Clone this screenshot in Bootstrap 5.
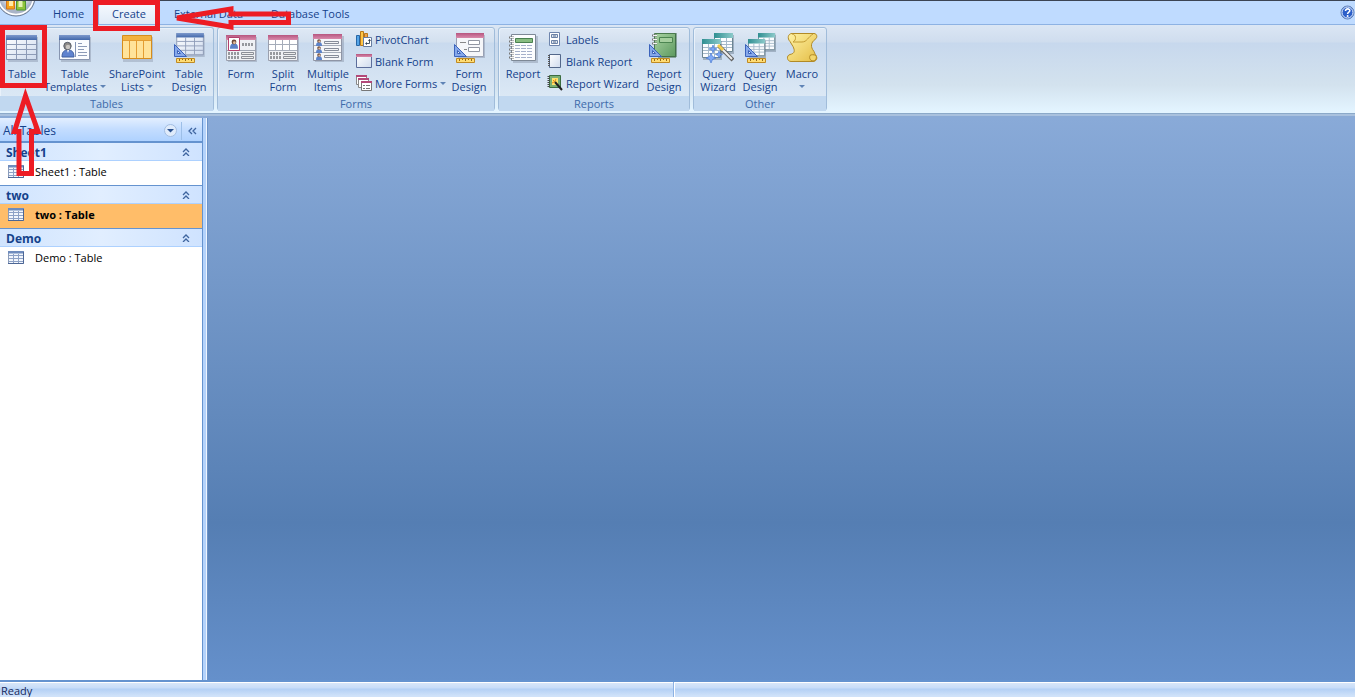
<!DOCTYPE html>
<html lang="en">
<head>
<meta charset="utf-8">
<meta name="viewport" content="width=device-width, initial-scale=1">
<title>Database – Create</title>
<link href="https://cdn.jsdelivr.net/npm/bootstrap@5.3.0/dist/css/bootstrap.min.css" rel="stylesheet">
<style>
  body { font-family: "Open Sans", "Noto Sans", sans-serif; font-size: 11px; line-height: 13px; color: #15428b; background: #bfdbff; }
  button { font: inherit; color: inherit; background: none; border: 0; padding: 0; }
  svg { display: block; flex: none; }

  .tabbar { height: 24px; border-top: 1px solid #3b4454; background: #bfdbff; }
  .orb { width: 40px; display: flex; align-items: flex-start; }
  .ribbon-tabs { --bs-nav-tabs-border-width: 0; gap: 2px; }
  .ribbon-tabs .nav-link { padding: 6px 13px 4px; font-size: 11px; line-height: 13px; color: #15428b; border: 0; }
  .ribbon-tabs .nav-link.active { color: #15428b; background: linear-gradient(#f8fbff, #dfeaf7); border-radius: 3px 3px 0 0; box-shadow: 0 0 0 1px #8db2e3; }

  .ribbon { height: 90px; padding: 2px 0; border-top: 1px solid #8db2e3; border-bottom: 1px solid #8ba9c9;
    background: linear-gradient(#dbe6f4 0, #cfddee 17px, #c7d8ed 18px, #d3e2ee 60px, #e3f4ff 86px); gap: 3px; }
  .ribbon-edge { height: 4px; background: #a9c1de; border-bottom: 2px solid #8aaad6; }
  .tool-group { border: 1px solid #a0bcda; border-radius: 3px; background: linear-gradient(#dfe9f5 0, #d3e0ef 14px, #c9daee 15px, #dbe8f5 68px); box-shadow: inset 1px 1px 0 #e9f1fa; width: fit-content; }
  .tool-group.first { border-left: 0; border-radius: 0 3px 3px 0; }
  .tools { display: grid; height: 68px; padding: 0 2px; }
  .tools-tables { grid-template-columns: 44px 62px 62px 42px; padding: 0 3px 0 0; }
  .tools-forms { grid-template-columns: 42px 42px 48px 96px 42px; padding: 0 4px 0 2px; }
  .tools-reports { grid-template-columns: 48px 96px 42px; padding: 0 4px 0 0; }
  .tools-other { grid-template-columns: 42px 42px 42px; padding: 0 3px; }
  .group-name { height: 15px; line-height: 15px; text-align: center; color: #3e6aaa; background: #c1d8f0; }
  .big { display: flex; flex-direction: column; align-items: center; padding-top: 4px; white-space: nowrap; }
  .big span { margin-top: 3px; }
  .small-list { display: flex; flex-direction: column; padding-left: 4px; }
  .tools-reports .small-list { padding-left: 0; }
  .small-list button { display: flex; align-items: center; height: 22px; gap: 3px; white-space: nowrap; text-align: left; }
  .caret { display: inline-block; border: 3px solid transparent; border-top-color: #5f83b5; border-bottom: 0; vertical-align: 3px; }

  .side { width: 203px; background: #fff; border-right: 1px solid #6593cf; }
  .pane-head { height: 25px; font-size: 12px; padding: 2px 0 0 3px; border-bottom: 2px solid #6593cf; background: linear-gradient(#e3efff, #c4ddff 11px, #afd2ff); }
  .pane-head .shut { width: 21px; height: 18px; border-left: 1px solid #9dbfe8; display: grid; place-items: center; }
  .section-head { width: 100%; height: 18px; padding: 1px 12px 0 6px; font-size: 12px; font-weight: 700; border-bottom: 1px solid #add1ff; background: linear-gradient(90deg, #d0e4fe, #e1eeff 50%, #cfe3ff); }
  .entry { height: 25px; padding: 0 8px 4px; gap: 11px; color: #000; text-decoration: none; border-bottom: 1px solid #6593cf; }
  .entry.chosen { background: #ffbd69; font-weight: 700; }
  .entry.final { border-color: transparent; }
  .splitter { width: 4px; background: #b5d3fb; border-right: 1px solid #eef5ff; }
  .canvas { background: linear-gradient(#89aad8, #557eb3 72%, #6590cb); border-left: 1px solid #6c93c8; }
  .status { height: 17px; padding-left: 1px; border-top: 2px solid #6593cf; background: linear-gradient(#fff 0, #fff 1px, #d7e6f9 1px, #c7dcf8 6px, #b3d0f5 7px, #d0e2f9 14px); color: #15285b; }
  .status > div { flex: 1 1 50%; padding-top: 2px; }
  .status > div:first-child { flex: 0 0 calc(50% - 5px); }
  .status > div + div { border-left: 1px solid #8db2e3; box-shadow: inset 1px 0 0 #fff; }
  .marks { position: absolute; left: 0; top: 0; pointer-events: none; }
</style>
</head>
<body>
<svg width="0" height="0" class="position-absolute" aria-hidden="true">
  <defs>
    <linearGradient id="gBlue" x2="0" y2="1"><stop stop-color="#7d99cc"/><stop offset="1" stop-color="#4268ab"/></linearGradient>
    <linearGradient id="gRose" x2="0" y2="1"><stop stop-color="#b6567f"/><stop offset="1" stop-color="#d98aac"/></linearGradient>
    <linearGradient id="gTeal" x2="1"><stop stop-color="#2f8f92"/><stop offset="1" stop-color="#8ccaca"/></linearGradient>
    <linearGradient id="gCell" x2="1" y2="1"><stop stop-color="#fff"/><stop offset="1" stop-color="#cfdbee"/></linearGradient>
    <linearGradient id="gGold" x2="1" y2="1"><stop stop-color="#fff3a6"/><stop offset="1" stop-color="#e4bd45"/></linearGradient>
    <linearGradient id="gGreen" x2="1" y2="1"><stop stop-color="#a9d3a2"/><stop offset="1" stop-color="#5d9a60"/></linearGradient>
    <radialGradient id="gOrb" cy=".35"><stop stop-color="#fff"/><stop offset=".6" stop-color="#e8ebf2"/><stop offset="1" stop-color="#a9b4c8"/></radialGradient>
    <symbol id="ruler" viewBox="0 0 32 32">
      <path d="M1.500 12.500v12h12z" fill="#86a8ea" stroke="#3c63bb"/><path d="M4.500 18.500v3h3z" fill="#eaf1fc" stroke="#3c63bb"/>
      <path d="M3.500 26.500h18v4h-18z" fill="#ffdc73" stroke="#c08a22"/><path d="M6.500 27v2m3-2v1m3-1v2m3-2v1m3-1v2" stroke="#94691a"/>
    </symbol>
    <symbol id="grid" viewBox="0 0 32 27">
      <path d="M2 2h30v25H2z" fill="#8794aa" opacity=".45"/><path d="M.5.500h30v24H.5z" fill="url(#gCell)" stroke="#8795b0"/>
      <path d="M0 0h31v5H0z" fill="url(#gBlue)"/><path d="M1 9.500h29M1 14.500h29M1 19.500h29M10.500 5v19M20.500 5v19" stroke="#8d9bb7"/>
    </symbol>
    <symbol id="tealgrid" viewBox="0 0 20 21"><path d="M1 2h19v19H1z" fill="#5a6c7c" opacity=".4"/><path d="M.5.500h18v18H.5z" fill="#fbfdff" stroke="#6c8592"/><path d="M0 0h19v5H0z" fill="url(#gTeal)"/><path d="M1 8.500h17M1 11.500h17M1 14.500h17M6.500 5v13M12.500 5v13" stroke="#a5b9ca"/></symbol>
    <symbol id="minigrid" viewBox="0 0 16 13"><path d="M.5.500h15v12H.5z" fill="#f2f6fc" stroke="#8a9cbb"/><path d="M0 0h16v2.500H0z" fill="#6f8cbd"/><path d="M1 4.500h14M1 7.500h14M1 10.500h14M5.500 3v9M10.500 3v9" stroke="#8ea2c6"/><path d="M15.500 1v11.500H0" fill="none" stroke="#4c6695"/></symbol>
    <symbol id="fold" viewBox="0 0 8 8"><path d="M1 4l3-3 3 3M1 8l3-3 3 3" fill="none" stroke="#3f659f" stroke-width="1.300"/></symbol>
    <symbol id="formbase" viewBox="0 0 32 32">
      <path d="M3 5h29v25H3z" fill="#7c869b" opacity=".4"/><path d="M1.500 3.500h29v25h-29z" fill="#eff1f5" stroke="#9a9fad"/><path d="M1 3h30v5H1z" fill="url(#gRose)"/>
      <path d="M2 18.500h28" stroke="#9da3b0"/><path d="M3 21.500h12M3 25.500h12" stroke="#96999e" stroke-width="3" stroke-dasharray="2 1"/><path d="M16.500 20.500h12v2h-12zM16.500 24.500h12v2h-12z" fill="#eee" stroke="#8b8f97"/>
    </symbol>
    <symbol id="designform" viewBox="0 0 32 32"><path d="M5 3h27v23H5z" fill="#7c869b" opacity=".4"/><path d="M3.500 1.500h27v23h-27z" fill="#f5f6f9" stroke="#98a0b4"/><path d="M3 1h28v5H3z" fill="url(#gRose)"/><path d="M7 10.500h6M11 17.500h3" stroke="#888"/><path d="M15.500 8.500h11v4h-11zM15.500 15.500h11v4h-11z" fill="#fff" stroke="#9196a2"/><use href="#ruler"/></symbol>
    <symbol id="person" viewBox="0 0 6 7"><path d="M0 7c0-3 1-4 3-4s3 1 3 4z" fill="#5b82c9"/><circle cx="3" cy="2" r="1.800" fill="#6c4a3a"/><circle cx="3.300" cy="2.500" r="1" fill="#e4bd9f"/></symbol>
    <symbol id="spiral" viewBox="0 0 6 24"><path d="M0 1.500h5M0 5.500h5M0 9.500h5M0 13.500h5M0 17.500h5M0 21.500h5" stroke="#777" stroke-width="2"/><path d="M1 1.500h4M1 5.500h4M1 9.500h4M1 13.500h4M1 17.500h4M1 21.500h4" stroke="#f4f4f4"/></symbol>
  </defs>
</svg>

<div class="d-flex flex-column vh-100 overflow-hidden position-relative">
  <header class="tabbar d-flex flex-shrink-0">
    <button class="orb" aria-label="Office menu">
      <svg width="36" height="18" viewBox="0 0 36 18"><circle cx="16" cy="-4" r="19" fill="url(#gOrb)" stroke="#69788f"/><circle cx="16" cy="-4" r="17.500" fill="none" stroke="#fff" stroke-width="1.500"/>
        <path d="M6.500-1h8v9h-8z" fill="#f4a21b" stroke="#d4731c"/><path d="M9-1h4v6H9z" fill="#ffe9a6"/><path d="M16.500 0h9v9h-9z" fill="#8fc33a" stroke="#4d9431"/><path d="M18.500 0h4v6h-4z" fill="#e4f3b3"/></svg>
    </button>
    <nav class="nav nav-tabs ribbon-tabs" aria-label="Ribbon tabs">
      <a class="nav-link" href="#">Home</a>
      <a class="nav-link active" href="#" aria-current="page">Create</a>
      <a class="nav-link" href="#">External Data</a>
      <a class="nav-link" href="#">Database Tools</a>
    </nav>
    <button class="ms-auto" aria-label="Help">
      <svg width="15" height="15" viewBox="0 0 15 15"><circle cx="7.500" cy="7.500" r="6.500" fill="#2c5fc9" stroke="#5c7fb8"/><circle cx="7.500" cy="7.500" r="5.500" fill="none" stroke="#e6f0ff"/><path d="M5.500 6c0-3 4.500-2.600 4.300-.2C9.700 7.200 7.600 7 7.600 9" fill="none" stroke="#fff" stroke-width="1.600"/><circle cx="7.600" cy="11" r="1" fill="#fff"/></svg>
    </button>
  </header>

  <div class="ribbon d-flex flex-shrink-0" role="toolbar" aria-label="Create">
    <section class="tool-group first">
      <div class="tools tools-tables">
        <button class="big"><svg width="32" height="32" viewBox="0 0 32 32"><use href="#grid" y="3" width="32" height="27"/></svg><span>Table</span></button>
        <button class="big"><svg width="32" height="32" viewBox="0 0 32 32"><path d="M2 5h30v25H2z" fill="#7c869b" opacity=".4"/><path d="M.5 3.500h30v24H.5z" fill="#fafcff" stroke="#8795b0"/><path d="M0 3h31v5H0z" fill="url(#gBlue)"/><path d="M3 25c0-5 2-7 6-7s6 2 6 7z" fill="#5f83cf" stroke="#3f5f9e"/><path d="M8 18l1 3 1-3z" fill="#fff"/><circle cx="8.500" cy="14" r="3.700" fill="#8c8a88" stroke="#555c68"/><circle cx="9" cy="15" r="2.200" fill="#c9c6c3"/><path d="M16.500 10v15" stroke="#8294b5"/><path d="M19 11.500h4M19 14.500h9M19 17.500h6M19 20.500h9M19 23.500h9" stroke="#8c9bb8"/></svg><span>Table<br>Templates <i class="caret"></i></span></button>
        <button class="big"><svg width="32" height="32" viewBox="0 0 32 32"><path d="M2 5h30v25H2z" fill="#7c869b" opacity=".35"/><path d="M1.500 3.500h29v23h-29z" fill="#ffe39a" stroke="#d68d1c"/><path d="M2 4h28v4H2z" fill="#f2b23f"/><path d="M2 8.500h28M8.500 8v18M15.500 8v18M22.500 8v18" stroke="#e39d33"/></svg><span>SharePoint<br>Lists <i class="caret"></i></span></button>
        <button class="big"><svg width="32" height="32" viewBox="0 0 32 32"><use href="#grid" x="3" y="1" width="29" height="24"/><use href="#ruler"/></svg><span>Table<br>Design</span></button>
      </div>
      <div class="group-name">Tables</div>
    </section>

    <section class="tool-group">
      <div class="tools tools-forms">
        <button class="big"><svg width="32" height="32" viewBox="0 0 32 32"><use href="#formbase"/><path d="M3.500 5.500h11v13h-11z" fill="#fff" stroke="#b2416e"/><use href="#person" x="5" y="7" width="8" height="10"/><path d="M17 12.500h11" stroke="#96999e" stroke-width="3" stroke-dasharray="2 1"/></svg><span>Form</span></button>
        <button class="big"><svg width="32" height="32" viewBox="0 0 32 32"><use href="#formbase"/><path d="M2 8h28v10H2z" fill="#fff"/><path d="M2 12.500h28M2 18.500h28M8.500 8v10M15.500 8v10M22.500 8v10" stroke="#a5acb9"/></svg><span>Split<br>Form</span></button>
        <button class="big"><svg width="32" height="32" viewBox="0 0 32 32"><path d="M3 4h29v26H3z" fill="#7c869b" opacity=".4"/><path d="M1.500 2.500h28v26h-28z" fill="#f5f6f9" stroke="#8f95a5"/><path d="M1 2h29v5H1z" fill="url(#gRose)"/><path d="M2 13.500h27M2 20.500h27" stroke="#a5acb9"/><use href="#person" x="4" y="7" width="6" height="7"/><use href="#person" x="4" y="14" width="6" height="7"/><use href="#person" x="4" y="21" width="6" height="7"/><path d="M12.500 9.500h14v2h-14zM12.500 16.500h14v2h-14zM12.500 23.500h14v2h-14z" fill="#f3f4f6" stroke="#858b99"/></svg><span>Multiple<br>Items</span></button>
        <div class="small-list">
          <button><svg width="16" height="16" viewBox="0 0 16 16"><path d="M.5 4.500h3v10h-3z" fill="#55a5e8" stroke="#2866a5"/><path d="M4.500.500h3v14h-3z" fill="#ffc647" stroke="#b8781a"/><path d="M8.500 2.500h3v5h-3z" fill="#f0a04b" stroke="#b8781a"/><path d="M7.500 6.500h8v9h-8z" fill="#fff" stroke="#667ca0"/><path d="M10 12.500h3.500v-4" fill="none" stroke="#456"/><path d="M9 12.500l2-1.500v3zM13.500 8l-1.500 2h3z" fill="#345"/></svg>PivotChart</button>
          <button><svg width="16" height="16" viewBox="0 0 16 16"><path d="M.5 1.500h15v13H.5z" fill="url(#gCell)" stroke="#5b6d9b"/><path d="M0 1h16v3H0z" fill="url(#gRose)"/></svg>Blank Form</button>
          <button><svg width="16" height="16" viewBox="0 0 16 16"><path d="M.5.500h10v9H.5z" fill="#fff" stroke="#888"/><path d="M0 0h11v2H0z" fill="#b34878"/><path d="M2.500 3.500h10v9h-10z" fill="#fff" stroke="#888"/><path d="M2 3h11v2H2z" fill="#b34878"/><path d="M5.500 6.500h10v9h-10z" fill="#fff" stroke="#777"/><path d="M5 6h11v2H5z" fill="#b34878"/><path d="M7 10.500h2m1 0h4M7 13.500h2m1 0h4" stroke="#777"/></svg>More Forms <i class="caret"></i></button>
        </div>
        <button class="big"><svg width="32" height="32" viewBox="0 0 32 32"><use href="#designform"/></svg><span>Form<br>Design</span></button>
      </div>
      <div class="group-name">Forms</div>
    </section>

    <section class="tool-group">
      <div class="tools tools-reports">
        <button class="big"><svg width="32" height="32" viewBox="0 0 32 32"><path d="M6 4h25v27H6z" fill="#7c869b" opacity=".4"/><path d="M4.500 2.500h24v26h-24z" fill="#fcfdfe" stroke="#7d8896"/><path d="M8.500 6.500h17v4h-17z" fill="#88bd81" stroke="#4a8050"/><path d="M8 13.500h18M8 16.500h18M8 19.500h18M8 22.500h18M8 25.500h18" stroke="#a5b0ca" stroke-dasharray="5 1"/><use href="#spiral" x="2" y="4" width="6" height="24"/></svg><span>Report</span></button>
        <div class="small-list">
          <button><svg width="16" height="16" viewBox="0 0 16 16"><path d="M2.500 1.500h10v13h-10z" fill="#fff" stroke="#6e85ad"/><path d="M4.500 3.500h6v3h-6zM4.500 9.500h6v3h-6z" fill="#dfe8f4" stroke="#6b82a6"/><path d="M6 5h3M6 11h3" stroke="#5d6f8d"/></svg>Labels</button>
          <button><svg width="16" height="16" viewBox="0 0 16 16"><path d="M2.500 1.500h11v13h-11z" fill="url(#gCell)" stroke="#53678a"/><path d="M2 2v12" stroke="#555" stroke-width="2" stroke-dasharray="1 1"/></svg>Blank Report</button>
          <button><svg width="16" height="16" viewBox="0 0 16 16"><path d="M2.500.500h11v12h-11z" fill="#7caf73" stroke="#3c6d40"/><path d="M5 3h6v7H5z" fill="#ffe36c"/><path d="M1.500 1v12" stroke="#444" stroke-width="2" stroke-dasharray="1 1"/><path d="M8 7l7 8" stroke="#222" stroke-width="2"/><path d="M6 5l2 2M5 8l2-1M9 4L8 6" stroke="#e58c16"/></svg>Report Wizard</button>
        </div>
        <button class="big"><svg width="32" height="32" viewBox="0 0 32 32"><path d="M6.500 1.500h21v23h-21z" fill="url(#gGreen)" stroke="#4b7b4f"/><path d="M28 1v24H10" fill="none" stroke="#3d6946"/><path d="M11.500 5.500h13v5h-13z" fill="#a6cf9f" stroke="#4c8551"/><svg x="4" y="2" width="6" height="12" viewBox="0 0 6 12"><use href="#spiral" width="6" height="24"/></svg><use href="#ruler"/></svg><span>Report<br>Design</span></button>
      </div>
      <div class="group-name">Reports</div>
    </section>

    <section class="tool-group">
      <div class="tools tools-other">
        <button class="big"><svg width="32" height="32" viewBox="0 0 32 32"><use href="#tealgrid" x="12" y="1" width="20" height="21"/><use href="#tealgrid" x="0" y="7" width="20" height="21"/><path d="M11 13l1 3 3 1-3 1-1 3-1-3-3-1 3-1zM9 21l1.500 3.500L14 26l-3.500 1.500L9 31l-1.500-3.500L4 26l3.500-1.500zM17 19l1 2.500 2.500 1-2.500 1-1 2.500-1-2.500-2.500-1 2.500-1z" fill="#7fa9f5" stroke="#3c70cf" stroke-width=".6"/><path d="M17 14l14 14" stroke="#626262" stroke-width="4"/><path d="M17 14l13 13" stroke="#eee" stroke-width="2"/><path d="M16 13l5 5" stroke="#f3cc4d" stroke-width="3"/></svg><span>Query<br>Wizard</span></button>
        <button class="big"><svg width="32" height="32" viewBox="0 0 32 32"><use href="#tealgrid" x="14" y="1" width="18" height="19"/><use href="#tealgrid" x="4" y="7" width="18" height="19"/><use href="#ruler"/></svg><span>Query<br>Design</span></button>
        <button class="big"><svg width="32" height="32" viewBox="0 0 32 32"><path d="M6 1.500h22c3 0 4 4 1 6-4 3-5 7-1 12 1 2 1 3 2 4 2 3 0 6-3 6H5c-4 0-5-6-1-7 5-1 5-4 3-8-1-2-2-3-3-5-3-3-2-8 2-8z" fill="url(#gGold)" stroke="#b18a26"/><path d="M6 2c4 0 5 6 1 8h9c5 0 6-5 11-8M28 23c-3 0-4 3-2 6" fill="none" stroke="#c39c33"/><path d="M24 23.500c1-1 4-1 6 0 1 2 0 5-3 5.500-3-.5-4-3-3-5.500z" fill="#f3d76c" stroke="#b18a26"/></svg><span>Macro<br><i class="caret"></i></span></button>
      </div>
      <div class="group-name">Other</div>
    </section>
  </div>
  <div class="ribbon-edge flex-shrink-0"></div>

  <div class="d-flex flex-grow-1 overflow-hidden">
    <aside class="side flex-shrink-0">
      <div class="pane-head d-flex align-items-center">
        <span>All Tables</span>
        <button class="ms-auto me-1" aria-label="Choose category"><svg width="13" height="13" viewBox="0 0 13 13"><circle cx="6.500" cy="6.500" r="6" fill="#dfebfb" stroke="#a3bde0"/><path d="M3 5h7L6.500 8.500z" fill="#29508f"/></svg></button>
        <button class="shut" aria-label="Collapse pane"><svg width="9" height="8" viewBox="0 0 9 8"><path d="M4 1L1 4l3 3M8 1L5 4l3 3" fill="none" stroke="#3f659f" stroke-width="1.300"/></svg></button>
      </div>
      <button class="section-head d-flex align-items-center justify-content-between">Sheet1<svg width="8" height="9"><use href="#fold" width="8" height="8"/></svg></button>
      <a href="#" class="entry d-flex align-items-center"><svg width="16" height="13"><use href="#minigrid"/></svg>Sheet1 : Table</a>
      <button class="section-head d-flex align-items-center justify-content-between">two<svg width="8" height="9"><use href="#fold" width="8" height="8"/></svg></button>
      <a href="#" class="entry chosen d-flex align-items-center"><svg width="16" height="13"><use href="#minigrid"/></svg>two : Table</a>
      <button class="section-head d-flex align-items-center justify-content-between">Demo<svg width="8" height="9"><use href="#fold" width="8" height="8"/></svg></button>
      <a href="#" class="entry final d-flex align-items-center"><svg width="16" height="13"><use href="#minigrid"/></svg>Demo : Table</a>
    </aside>
    <div class="splitter flex-shrink-0"></div>
    <main class="canvas flex-grow-1"></main>
  </div>

  <footer class="status d-flex flex-shrink-0"><div>Ready</div><div></div></footer>

  <svg class="marks" width="300" height="180" viewBox="0 0 300 180" fill="none" stroke="#ed1c24" stroke-width="5" aria-hidden="true">
    <path d="M95.500 2.500h62v26h-62zM2.500 27.500h42v58h-42z"/>
    <path d="M177 18l54-9v5h57.500v8.500H231V27z"/>
    <path d="M25.500 96l-11 35.500h4.500v42h12.500v-42h6.500z"/>
  </svg>
</div>
<script src="https://cdn.jsdelivr.net/npm/bootstrap@5.3.0/dist/js/bootstrap.bundle.min.js"></script>
</body>
</html>
